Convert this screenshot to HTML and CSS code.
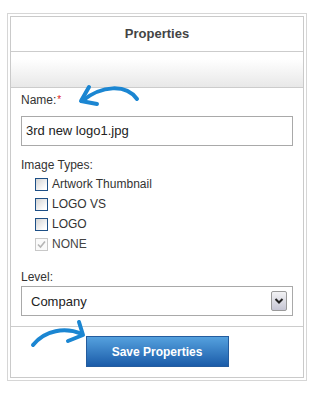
FILE: index.html
```html
<!DOCTYPE html>
<html lang="en">
<head>
    <meta charset="UTF-8">
    <title>Properties</title>
    <link rel="stylesheet" href="styles.css">
</head>
<body>
    <div class="panel">
        <div class="panel-inner">
            <div class="panel-header">Properties</div>
            <div class="panel-band"></div>

            <div class="panel-body">
                <label class="field-label">Name:<span class="req">*</span></label>
                <div class="text-input">3rd new logo1.jpg</div>

                <label class="field-label types-label">Image Types:</label>
                <div class="check-list">
                    <div class="check-row"><span class="check-box"></span>Artwork Thumbnail</div>
                    <div class="check-row"><span class="check-box"></span>LOGO VS</div>
                    <div class="check-row"><span class="check-box"></span>LOGO</div>
                    <div class="check-row disabled">
                        <span class="check-box checked">
                            <svg width="11" height="11" viewBox="0 0 11 11"><path d="M2 5.5 L4.5 8 L9 2.5" fill="none" stroke="#b5b5b5" stroke-width="1.6"/></svg>
                        </span>NONE
                    </div>
                </div>

                <label class="field-label level-label">Level:</label>
                <div class="select-box">
                    <span>Company</span>
                    <span class="select-btn">
                        <svg width="10" height="8" viewBox="0 0 10 8"><path d="M1.5 2 L5 5.5 L8.5 2" fill="none" stroke="#222" stroke-width="2"/></svg>
                    </span>
                </div>
            </div>

            <div class="panel-footer">
                <button class="save-btn">Save Properties</button>
            </div>
        </div>
    </div>

    <!-- hand drawn hint arrows -->
    <svg class="hints" width="319" height="393" viewBox="0 0 319 393">
        <g fill="none" stroke="#1b86d2" stroke-width="4" stroke-linecap="round" stroke-linejoin="round">
            <path d="M137 99 C126 84, 102 85, 82 101"/>
            <path d="M89 87 L81 101 L97 104"/>
            <path d="M33 345 C45 330, 65 327, 82 334"/>
            <path d="M79 322 L83 335 L68 341"/>
        </g>
    </svg>
</body>
</html>
```

FILE: styles.css
```css
* {
    box-sizing: border-box;
}

body {
    margin: 0;
    position: relative;
    background: #fff;
    font-family: 'Liberation Sans', Arial, sans-serif;
    color: #333;
}

.panel {
    width: 300px;
    margin: 13px 0 0 7px;
    border: 1px solid #d6d6d6;
    padding: 2px;
    background: #fff;
}

.panel-inner {
    border: 1px solid #cacaca;
}

.panel-header {
    height: 35px;
    border-bottom: 1px solid #cccccc;
    text-align: center;
    font-size: 13px;
    font-weight: bold;
    color: #444;
    line-height: 33px;
}

.panel-band {
    height: 36px;
    border-bottom: 1px solid #cccccc;
    background: linear-gradient(#ffffff 20%, #e8e8e8);
}

.panel-body {
    padding: 5px 10px 10px;
    border-bottom: 1px solid #cccccc;
}

.field-label {
    display: block;
    font-size: 12px;
    line-height: 14px;
    margin-bottom: 9px;
}

.req {
    color: #e02020;
    font-size: 10px;
    vertical-align: top;
    margin-left: 1px;
}

.text-input {
    height: 30px;
    border: 1px solid #a9a9a9;
    padding: 0 4px;
    font-size: 13px;
    line-height: 28px;
    color: #222;
}

.types-label {
    margin-top: 12px;
    margin-bottom: 2px;
}

.check-list {
    padding-left: 14px;
}

.check-row {
    display: flex;
    align-items: center;
    gap: 4px;
    height: 20px;
    font-size: 12px;
}

.check-row.disabled {
    color: #444;
}

.check-box {
    width: 13px;
    height: 13px;
    border: 1px solid #1d4f86;
    background: linear-gradient(135deg, #d4d4d4, #ffffff 85%);
    display: flex;
    align-items: center;
    justify-content: center;
}

.check-box.checked {
    border-color: #c8c8c8;
    background: #fafafa;
}

.level-label {
    margin-top: 16px;
    margin-bottom: 2px;
}

.select-box {
    height: 30px;
    border: 1px solid #a9a9a9;
    display: flex;
    align-items: center;
    justify-content: space-between;
    padding: 0 5px 0 9px;
    font-size: 13px;
    color: #222;
}

.select-btn {
    width: 16px;
    height: 20px;
    border: 1px solid #9a9a9a;
    border-radius: 2px;
    background: linear-gradient(#f2f2f4, #c6c6d4);
    display: flex;
    align-items: center;
    justify-content: center;
}

.panel-footer {
    padding: 9px 0 10px;
    display: flex;
    justify-content: center;
}

.save-btn {
    width: 143px;
    height: 31px;
    border: 1px solid #245c9e;
    background: linear-gradient(#55a1de, #1b5ca9);
    color: #fff;
    font-family: 'Liberation Sans', Arial, sans-serif;
    font-size: 12px;
    font-weight: bold;
    padding: 0;
}

.hints {
    position: absolute;
    top: 0;
    left: 0;
    pointer-events: none;
}
```
